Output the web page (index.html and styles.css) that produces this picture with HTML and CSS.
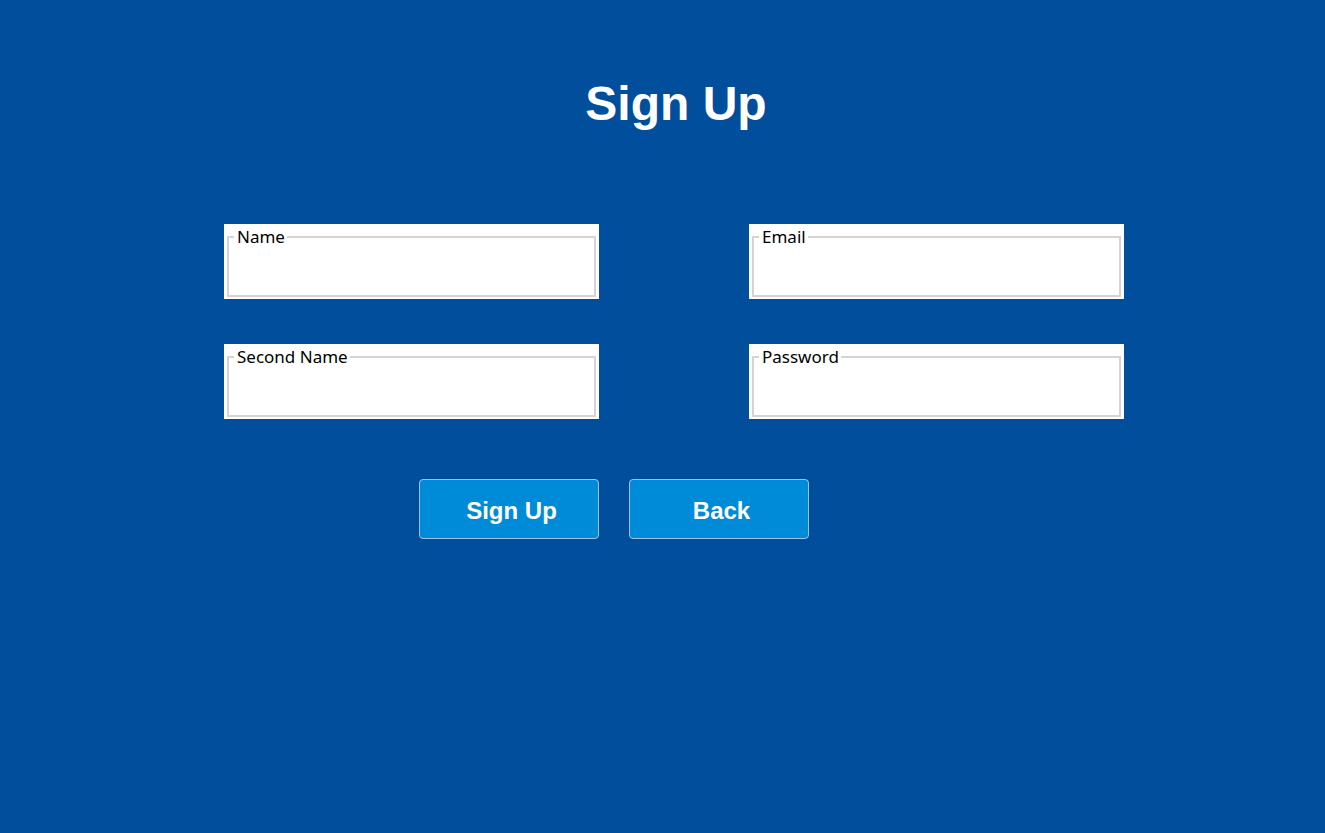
FILE: index.html
```html
<!DOCTYPE html>
<html>
<head>
<meta charset="utf-8">
<link rel="stylesheet" href="styles.css">
</head>
<body>
<main class="page">
  <h1 class="title">Sign Up</h1>
  <div class="grid">
    <div class="field"><fieldset><legend>Name</legend></fieldset></div>
    <div class="field"><fieldset><legend>Email</legend></fieldset></div>
    <div class="field"><fieldset><legend>Second Name</legend></fieldset></div>
    <div class="field"><fieldset><legend>Password</legend></fieldset></div>
  </div>
  <div class="actions">
    <button class="btn">Sign Up</button>
    <button class="btn">Back</button>
  </div>
</main>
</body>
</html>
```
FILE: styles.css
```css
html, body {
  margin: 0;
  padding: 0;
  background: #004e9c;
  height: 100%;
}
.page {
  width: 900px;
  margin-left: 226px;
  padding-top: 73px;
  font-family: "Liberation Sans", Arial, sans-serif;
}
.title {
  margin: 0;
  text-align: center;
  color: #fff;
  font-size: 48px;
  line-height: 62px;
  font-weight: bold;
}
.grid {
  margin-left: -2px;
  margin-top: 89px;
  display: grid;
  grid-template-columns: 375px 375px;
  column-gap: 150px;
  row-gap: 45px;
}
.field {
  background: #fff;
  height: 75px;
  box-sizing: border-box;
  padding: 2px 3px 2px 3px;
}
.field fieldset {
  margin: 0;
  height: 100%;
  box-sizing: border-box;
  border: 2px solid #d4d4d4;
  padding: 0 0 0 5px;
}
.field legend {
  padding: 0 2px 0 3px;
  font-family: "Noto Sans", "Open Sans", sans-serif;
  font-size: 17px;
  line-height: 22px;
  color: #000;
}
.actions {
  margin-left: 193px;
  margin-top: 60px;
  display: flex;
  gap: 30px;
}
.btn {
  width: 180px;
  height: 60px;
  box-sizing: border-box;
  background: #008bd9;
  border: 1px solid #9cc3e6;
  border-radius: 4px;
  color: #fff;
  font-family: "Liberation Sans", Arial, sans-serif;
  font-weight: bold;
  font-size: 24px;
  padding: 3px 0 0 5px;
}
```
